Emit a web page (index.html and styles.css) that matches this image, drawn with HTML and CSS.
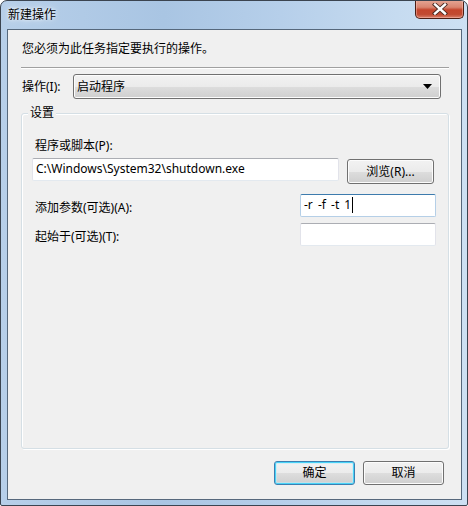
FILE: index.html
```html
<!DOCTYPE html>
<html lang="zh-CN">
<head>
<meta charset="utf-8">
<title>新建操作</title>
<link rel="stylesheet" href="styles.css">
</head>
<body>
<div class="window">
  <div class="titlebar">
    <span class="title">新建操作</span>
    <div class="close-btn">
      <svg width="18" height="12" viewBox="0 0 18 12">
        <path d="M4 1.5 L14 10.5 M14 1.5 L4 10.5" stroke="#4a2a22" stroke-width="4.2" stroke-linecap="square"/>
        <path d="M4 1.5 L14 10.5 M14 1.5 L4 10.5" stroke="#ffffff" stroke-width="2.4" stroke-linecap="square"/>
      </svg>
    </div>
  </div>
  <div class="client">
    <div class="instruction">您必须为此任务指定要执行的操作。</div>
    <div class="separator"></div>
    <div class="action-row">
      <span class="label action-label">操作(I):</span>
      <div class="combo">
        <span class="combo-text">启动程序</span>
        <svg class="combo-arrow" width="9" height="5" viewBox="0 0 9 5"><path d="M0 0 H9 L4.5 5 Z" fill="#000"/></svg>
      </div>
    </div>
    <div class="group">
      <span class="group-title">设置</span>
      <div class="label prog-label">程序或脚本(P):</div>
      <div class="prog-row">
        <div class="textbox prog-box">C:\Windows\System32\shutdown.exe</div>
        <div class="button browse">浏览(R)...</div>
      </div>
      <div class="field-row args-row">
        <span class="label field-label">添加参数(可选)(A):</span>
        <div class="textbox small-box focused"><span class="args-text">-r -f -t 1</span><span class="caret"></span></div>
      </div>
      <div class="field-row start-row">
        <span class="label field-label">起始于(可选)(T):</span>
        <div class="textbox small-box"></div>
      </div>
    </div>
    <div class="buttons">
      <div class="button dlg-btn default">确定</div>
      <div class="button dlg-btn">取消</div>
    </div>
  </div>
</div>
</body>
</html>
```

FILE: styles.css
```css
* { box-sizing: border-box; }
html, body { margin: 0; padding: 0; background: #ffffff; }
body {
  font-family: "Noto Sans", "Noto Sans CJK SC", sans-serif;
  font-size: 12px;
  color: #000;
}
.window {
  width: 468px;
  height: 506px;
  border: 1px solid #3b4450;
  border-radius: 7px 7px 2px 2px;
  background: linear-gradient(to right, #b7cfe9 0%, #a9c5e3 35%, #b6cfea 60%, #c6dbf0 85%, #cde0f3 100%);
  display: flex;
  flex-direction: column;
  overflow: hidden;
}
.titlebar {
  height: 28px;
  flex: none;
  display: flex;
  justify-content: space-between;
  align-items: flex-start;
}
.title {
  margin: 7px 0 0 7px;
  line-height: 14px;
  color: #000;
  text-shadow: 0 0 6px rgba(255,255,255,0.9), 0 0 3px rgba(255,255,255,0.9);
}
.close-btn {
  width: 49px;
  height: 19px;
  margin: -1px 3px 0 0;
  border: 1px solid #4c1e14;
  border-top: none;
  border-radius: 0 0 5px 5px;
  background: linear-gradient(to bottom, #e6a796 0%, #d98570 40%, #c4452c 55%, #c14a31 80%, #d9806a 100%);
  box-shadow: inset 0 0 0 1px rgba(255,200,190,0.45);
  display: flex;
  align-items: center;
  justify-content: center;
}
.client {
  flex: 1;
  margin: 0 5px 5px 6px;
  border: 1px solid #56687c;
  background: #f0f0f0;
  display: flex;
  flex-direction: column;
  padding: 0 12px 0 13px;
}
.label { line-height: 16px; white-space: nowrap; }
.instruction {
  margin-top: 11px;
  margin-left: 1px;
  line-height: 16px;
}
.separator {
  margin-top: 10px;
  height: 2px;
  border-top: 1px solid #a0a0a0;
  border-bottom: 1px solid #ffffff;
}
.action-row {
  margin-top: 5px;
  display: flex;
  align-items: center;
}
.action-label { width: 51px; margin-left: 1px; }
.combo {
  width: 368px;
  height: 25px;
  border: 1px solid #707070;
  border-radius: 3px;
  background: linear-gradient(to bottom, #f2f2f2 0%, #ebebeb 50%, #dddddd 51%, #cfcfcf 100%);
  box-shadow: inset 0 0 0 1px #fcfcfc;
  display: flex;
  align-items: center;
  justify-content: space-between;
  padding: 0 8px 0 3px;
}
.combo-text { line-height: 16px; }
.group {
  position: relative;
  margin-top: 14px;
  flex: 1;
  border: 1px solid #d5dfe5;
  border-radius: 3px;
  box-shadow: inset 1px 1px 0 #ffffff, 1px 1px 0 #ffffff;
  padding: 24px 12px 0 10px;
}
.group-title {
  position: absolute;
  top: -8px;
  left: 6px;
  padding: 0 2px;
  background: #f0f0f0;
  line-height: 14px;
}
.prog-label { margin-left: 3px; }
.prog-row {
  margin-top: 4px;
  display: flex;
  align-items: flex-start;
}
.textbox {
  height: 23px;
  border: 1px solid #e2e3ea;
  border-top-color: #abadb3;
  border-bottom-color: #e3e9ef;
  border-radius: 2px;
  background: #ffffff;
  line-height: 20px;
  padding: 0 3px;
  white-space: nowrap;
}
.prog-box { width: 307px; }
.textbox.focused {
  border-color: #b5cfe7;
  border-top-color: #3d7bad;
}
.args-text { word-spacing: 2px; }
.caret {
  display: inline-block;
  width: 1px;
  height: 16px;
  background: #000;
  vertical-align: -4px;
  margin-left: 1px;
}
.button {
  height: 25px;
  border: 1px solid #707070;
  border-radius: 3px;
  background: linear-gradient(to bottom, #f2f2f2 0%, #ebebeb 50%, #dddddd 51%, #cfcfcf 100%);
  box-shadow: inset 0 0 0 1px #fcfcfc;
  display: flex;
  align-items: center;
  justify-content: center;
  line-height: 16px;
  white-space: nowrap;
}
.browse {
  width: 87px;
  margin-left: 8px;
  margin-top: 1px;
}
.field-row {
  display: flex;
  justify-content: space-between;
  align-items: flex-start;
}
.args-row { margin-top: 10px; }
.start-row { margin-top: 6px; }
.field-label { margin-left: 3px; padding-top: 6px; }
.small-box { width: 136px; }
.buttons {
  flex: none;
  display: flex;
  justify-content: flex-end;
  gap: 8px;
  margin: 12px 5px 14px 0;
}
.dlg-btn { width: 81px; height: 24px; }
.dlg-btn.default {
  border-color: #3c7fb1;
  box-shadow: inset 0 0 0 1px #48d3f8, inset 0 0 0 2px rgba(190,235,250,0.5);
}
```
